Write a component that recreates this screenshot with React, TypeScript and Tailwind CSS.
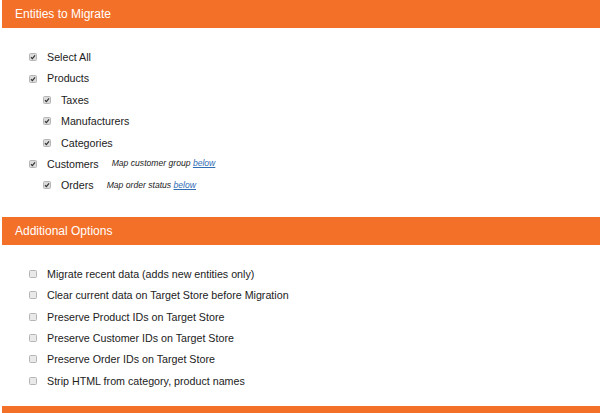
import React from "react";

function Box({ checked }: { checked: boolean }) {
  return (
    <svg width="8" height="8" viewBox="0 0 8 8" className="shrink-0">
      <rect x="0.5" y="0.5" width="7" height="7" rx="1" fill={checked ? "#dcdcdc" : "#e9e9e9"} stroke="#b5b5b5" />
      {checked && <path d="M2 4.3 L3.4 5.6 L6 2.4" fill="none" stroke="#333" strokeWidth="1.2" />}
    </svg>
  );
}

function Row({
  label,
  checked,
  nested,
  note,
}: {
  label: string;
  checked: boolean;
  nested?: boolean;
  note?: string;
}) {
  return (
    <div className={`flex items-center h-[21.35px] ${nested ? "pl-[41px]" : "pl-[27px]"}`}>
      <Box checked={checked} />
      <span className="ml-[10px] text-[10.7px] text-[#222]">{label}</span>
      {note && (
        <span className="ml-[13px] text-[8.6px] italic text-[#222]">
          {note} <span className="underline text-[#2f6db5]">below</span>
        </span>
      )}
    </div>
  );
}

function Header({ title }: { title: string }) {
  return (
    <div className="h-[28px] bg-[#f37028] flex items-center pl-[13px] text-white text-[12px]">
      {title}
    </div>
  );
}

export default function App() {
  return (
    <div
      className="w-[602px] h-[413px] bg-white overflow-hidden pl-[2px] pr-[2px]"
      style={{ fontFamily: '"Liberation Sans", Arial, sans-serif' }}
    >
      <Header title="Entities to Migrate" />
      <div className="pt-[18.5px] pb-[21px]">
        <Row label="Select All" checked />
        <Row label="Products" checked />
        <Row label="Taxes" checked nested />
        <Row label="Manufacturers" checked nested />
        <Row label="Categories" checked nested />
        <Row label="Customers" checked note="Map customer group" />
        <Row label="Orders" checked nested note="Map order status" />
      </div>
      <Header title="Additional Options" />
      <div className="pt-[18.5px] pb-[15px]">
        <Row label="Migrate recent data (adds new entities only)" checked={false} />
        <Row label="Clear current data on Target Store before Migration" checked={false} />
        <Row label="Preserve Product IDs on Target Store" checked={false} />
        <Row label="Preserve Customer IDs on Target Store" checked={false} />
        <Row label="Preserve Order IDs on Target Store" checked={false} />
        <Row label="Strip HTML from category, product names" checked={false} />
      </div>
      <div className="h-[10px] bg-[#f37028]" />
    </div>
  );
}
